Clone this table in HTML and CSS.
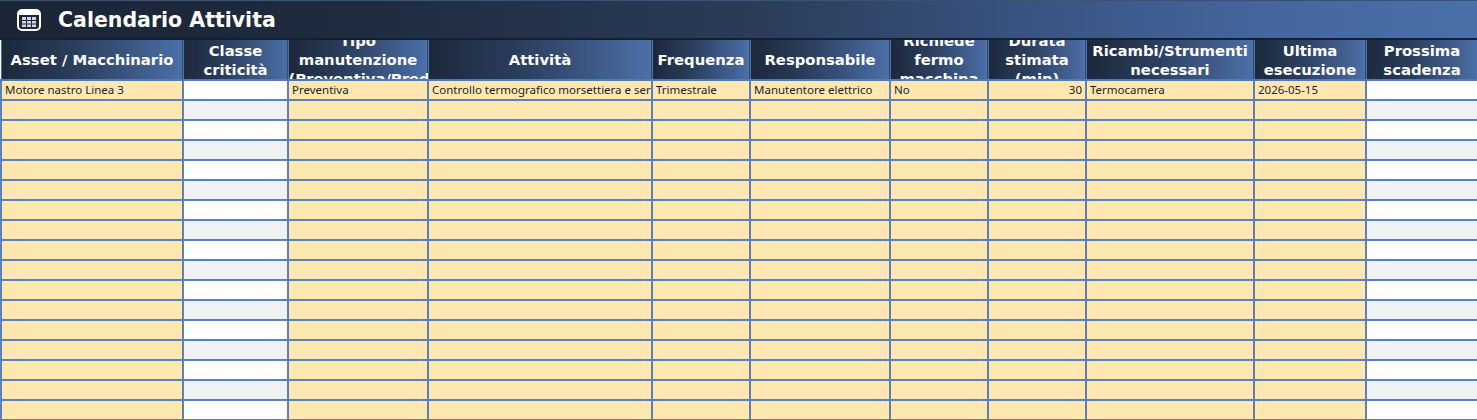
FILE: index.html
```html
<!DOCTYPE html>
<html lang="it">
<head>
<meta charset="utf-8">
<title>Calendario Attivita</title>
<link rel="stylesheet" href="styles.css">
</head>
<body>
<div class="titlebar">
  <svg class="cal-icon" width="26" height="24" viewBox="0 0 26 24">
    <rect x="2" y="2" width="22" height="20" rx="4" fill="#1d2a3e" stroke="#ffffff" stroke-width="2"/>
    <rect x="3" y="3" width="20" height="4" fill="#ffffff"/>
    <g fill="#cfd6e0">
      <rect x="6" y="9" width="4" height="3"/><rect x="11" y="9" width="4" height="3"/><rect x="16" y="9" width="4" height="3"/>
      <rect x="6" y="13" width="4" height="2.5"/><rect x="11" y="13" width="4" height="2.5"/><rect x="16" y="13" width="4" height="2.5"/>
      <rect x="6" y="16.5" width="4" height="2.5"/><rect x="11" y="16.5" width="4" height="2.5"/><rect x="16" y="16.5" width="4" height="2.5"/>
    </g>
  </svg>
  <h1 class="title">Calendario Attivita</h1>
</div>
<table class="grid">
  <colgroup>
    <col style="width:182px"><col style="width:105px"><col style="width:140px"><col style="width:224px">
    <col style="width:98px"><col style="width:140px"><col style="width:98px"><col style="width:98px">
    <col style="width:168px"><col style="width:112px"><col style="width:112px">
  </colgroup>
  <thead>
    <tr>
      <th><div class="hd"><span class="hd-text">Asset / Macchinario</span></div></th>
      <th><div class="hd"><span class="hd-text">Classe criticità</span></div></th>
      <th><div class="hd"><span class="hd-text">Tipo manutenzione (Preventiva/Predittiva/Correttiva)</span></div></th>
      <th><div class="hd"><span class="hd-text">Attività</span></div></th>
      <th><div class="hd"><span class="hd-text">Frequenza</span></div></th>
      <th><div class="hd"><span class="hd-text">Responsabile</span></div></th>
      <th><div class="hd"><span class="hd-text">Richiede fermo macchina</span></div></th>
      <th><div class="hd"><span class="hd-text">Durata stimata (min)</span></div></th>
      <th><div class="hd"><span class="hd-text">Ricambi/Strumenti necessari</span></div></th>
      <th><div class="hd"><span class="hd-text">Ultima esecuzione</span></div></th>
      <th><div class="hd"><span class="hd-text">Prossima scadenza</span></div></th>
    </tr>
  </thead>
  <tbody id="rows">
    <tr>
      <td class="in">Motore nastro Linea 3</td>
      <td class="calc"></td>
      <td class="in">Preventiva</td>
      <td class="in">Controllo termografico morsettiera e serraggio connessioni</td>
      <td class="in">Trimestrale</td>
      <td class="in">Manutentore elettrico</td>
      <td class="in">No</td>
      <td class="in num">30</td>
      <td class="in">Termocamera</td>
      <td class="in">2026-05-15</td>
      <td class="calc"></td>
    </tr>
  </tbody>
</table>
<script src="app.js"></script>
</body>
</html>
```
FILE: app.js
```js
(function () {
  var body = document.getElementById('rows');
  for (var i = 1; i < 17; i++) {
    var tr = document.createElement('tr');
    if (i % 2 === 1) tr.className = 'alt';
    for (var c = 0; c < 11; c++) {
      var td = document.createElement('td');
      td.className = (c === 1 || c === 10) ? 'calc' : 'in';
      tr.appendChild(td);
    }
    body.appendChild(tr);
  }
})();
```
FILE: styles.css
```css
html, body {
  margin: 0;
  padding: 0;
  background: #ffffff;
}
body {
  width: 1477px;
  overflow: hidden;
  font-family: "Noto Sans", "Liberation Sans", sans-serif;
}
.titlebar {
  height: 40px;
  box-sizing: border-box;
  border-top: 1px solid #3b5274;
  border-bottom: 2px solid #151f2d;
  display: flex;
  align-items: center;
  padding-left: 16px;
  gap: 16px;
  background: linear-gradient(to right, #1a2535 0%, #1f2c40 25%, #2a3b57 50%, #3a5482 70%, #44659d 85%, #4a70aa 100%);
}
.cal-icon {
  display: block;
  flex: none;
}
.title {
  margin: 0;
  color: #ffffff;
  font-family: "DejaVu Sans", Verdana, sans-serif;
  font-weight: bold;
  font-size: 20.5px;
  line-height: 26px;
}
.grid {
  border-collapse: collapse;
  table-layout: fixed;
  width: 1477px;
}
.grid th {
  padding: 0;
  height: 39px;
  border-left: 1px solid #4a6fa8;
  border-right: 1px solid #4a6fa8;
  border-bottom: 2px solid #5579b4;
  background: linear-gradient(to right, #1c283b 0%, #2a3d5c 40%, #4b6fa7 100%);
  vertical-align: middle;
}
.hd {
  height: 39px;
  display: flex;
  align-items: center;
  overflow: hidden;
}
.hd-text {
  display: block;
  width: 100%;
  min-width: 0;
  flex: none;
  text-align: center;
  color: #ffffff;
  font-family: "DejaVu Sans", Verdana, sans-serif;
  font-weight: bold;
  font-size: 14.8px;
  line-height: 19px;
  white-space: normal;
}
.grid td {
  height: 18px;
  padding: 0 3px;
  border: 2px solid #5b80bb;
  font-size: 11.5px;
  color: #1e1e1e;
  white-space: nowrap;
  overflow: hidden;
  vertical-align: middle;
  line-height: 14px;
}
.grid td.in {
  background: #ffe7b2;
}
.grid td.calc {
  background: #ffffff;
}
.grid tr.alt td.calc {
  background: #f0f2f5;
}
.grid td.num {
  text-align: right;
}
```
